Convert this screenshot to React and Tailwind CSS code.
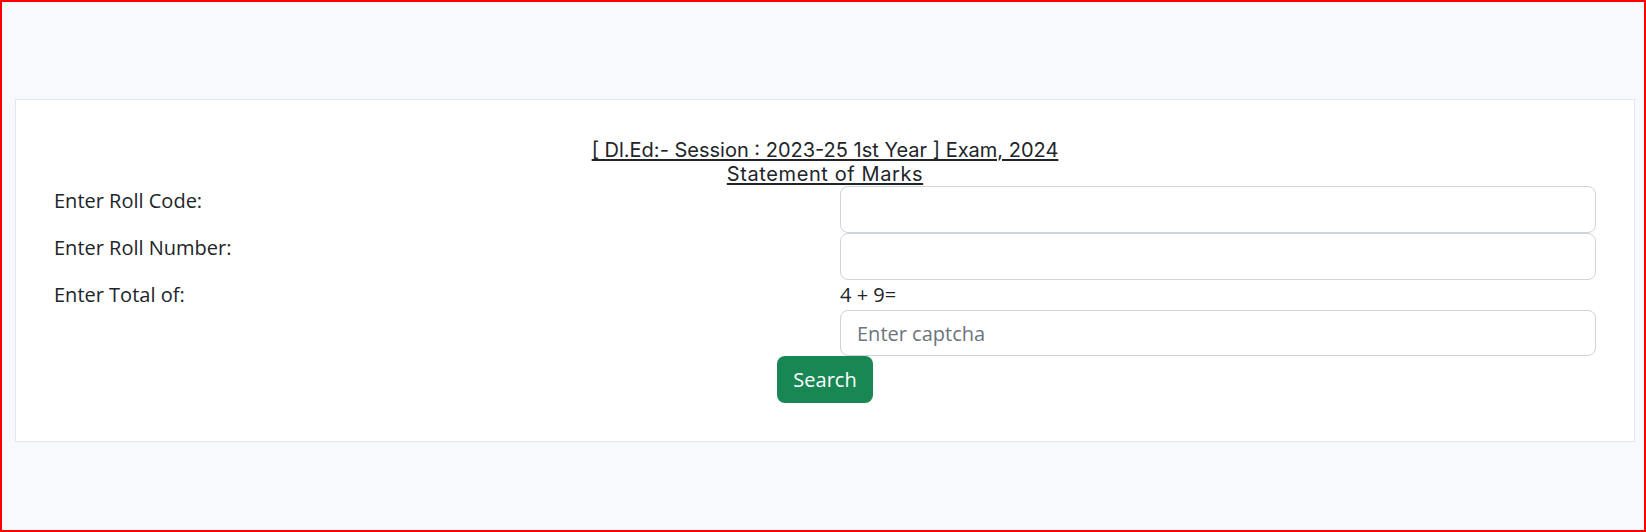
export default function App() {
  const label = "text-[20px] leading-[30px] text-[#212529]";
  const input =
    "w-full rounded-lg border border-[#ced4da] bg-white px-4 text-[20px] text-[#212529] outline-none placeholder:text-[#6c757d]";

  return (
    <div
      className="h-[532px] w-full border-2 border-[#ff0000] bg-[#f8f9fc] pl-[13px] pr-[9px] pt-[97px]"
      style={{ fontFamily: '"Open Sans", "Noto Sans", sans-serif' }}
    >
      {/* Card */}
      <div className="border border-[#e3e6f0] bg-white px-[23px] py-[38px]">
        <h5
          className="text-center text-[20px] leading-[24px] text-[#212529] underline underline-offset-2"
          style={{ fontFamily: 'Inter, "Liberation Sans", sans-serif' }}
        >
          [ Dl.Ed:- Session : 2023-25 1st Year ] Exam, 2024
          <br />
          <span className="tracking-[0.6px]">Statement of Marks</span>
        </h5>

        <div className="flex">
          <div className="w-1/2 px-[15px]">
            <label className={label}>Enter Roll Code:</label>
          </div>
          <div className="w-1/2 px-[15px]">
            <input className={`${input} h-[47px]`} />
          </div>
        </div>

        <div className="flex">
          <div className="w-1/2 px-[15px]">
            <label className={label}>Enter Roll Number:</label>
          </div>
          <div className="w-1/2 px-[15px]">
            <input className={`${input} h-[47px]`} />
          </div>
        </div>

        <div className="flex">
          <div className="w-1/2 px-[15px]">
            <label className={label}>Enter Total of:</label>
          </div>
          <div className="w-1/2 px-[15px]">
            <div className="h-[30px] text-[20px] leading-[30px] text-[#212529]">4 + 9=</div>
            <input className={`${input} h-[46px]`} placeholder="Enter captcha" />
          </div>
        </div>

        <div className="flex justify-center">
          <button className="h-[47px] rounded-lg bg-[#198754] px-4 text-[20px] text-white">
            Search
          </button>
        </div>
      </div>
    </div>
  );
}
